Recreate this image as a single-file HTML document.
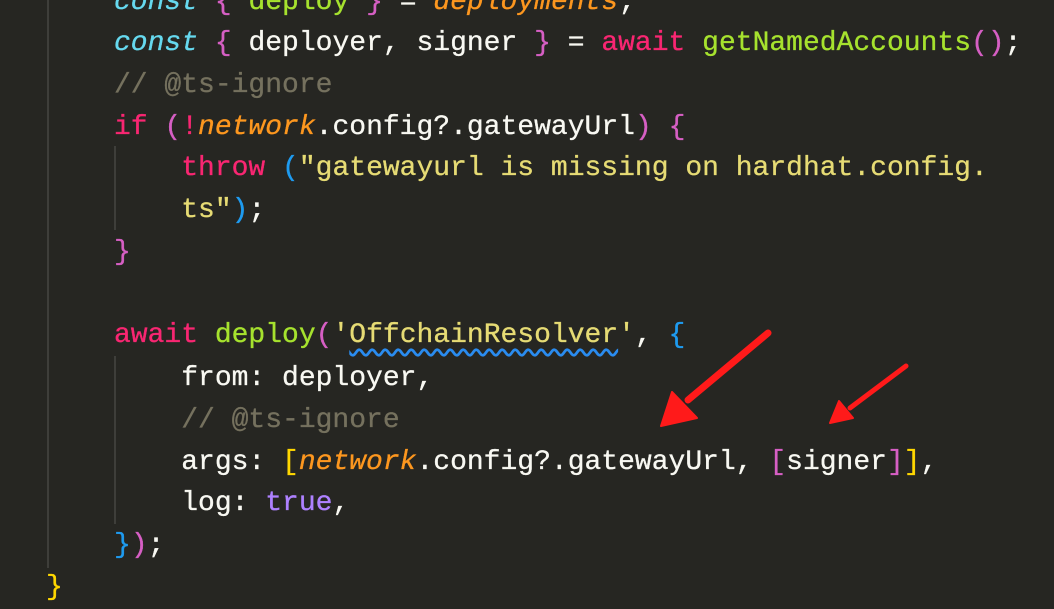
<!DOCTYPE html>
<html><head><style>
body{margin:0;width:1054px;height:576px;background:#262622;overflow:hidden;position:relative;font-family:"Liberation Mono",monospace;font-size:28px;}
.l{position:absolute;left:114px;white-space:pre;color:#f8f8f2;line-height:42px;height:42px;-webkit-text-stroke:0.3px currentColor}
.k{color:#f92672}.c{color:#66d9ef;font-style:italic}.s{color:#e6db74}.g{color:#a6e22e}.p{color:#d65fc4}.b{color:#1e9bf0}
.cm{color:#75715e}.n{color:#fd971f;font-style:italic}.t{color:#ae81ff}.y{color:#ffd700}
.guide{position:absolute;width:2px;background:#3e3e3a}
</style></head><body>
<div class="guide" style="left:47px;top:0;height:568px"></div>
<div class="guide" style="left:114px;top:146px;height:84px"></div>
<div class="guide" style="left:114px;top:356px;height:168px"></div>
<div class="l" style="top:-18px"><span class="c">const</span> <span class="p">{</span> <span class="g">deploy</span> <span class="p">}</span> = <span class="n">deployments</span>;</div>
<div class="l" style="top:23px"><span class="c">const</span> <span class="p">{</span> deployer, signer <span class="p">}</span> = <span class="k">await</span> <span class="g">getNamedAccounts</span><span class="p">(</span><span class="p">)</span>;</div>
<div class="l cm" style="top:65px">// @ts-ignore</div>
<div class="l" style="top:107px"><span class="k">if</span> <span class="p">(</span><span class="k">!</span><span class="n">network</span>.config?.gatewayUrl<span class="p">)</span> <span class="p">{</span></div>
<div class="l" style="top:148px">    <span class="k">throw</span> <span class="b">(</span><span class="s">"gatewayurl is missing on hardhat.config.</span></div>
<div class="l" style="top:190px">    <span class="s">ts"</span><span class="b">)</span>;</div>
<div class="l" style="top:232px"><span class="p">}</span></div>
<div class="l" style="top:315px"><span class="k">await</span> <span class="g">deploy</span><span class="p">(</span><span class="s">'<span style="text-decoration:underline wavy #2a8cf0;text-underline-offset:6px">OffchainResolver</span>'</span>, <span class="b">{</span></div>
<div class="l" style="top:358px">    from: deployer,</div>
<div class="l cm" style="top:400px">    // @ts-ignore</div>
<div class="l" style="top:442px">    args: <span class="y">[</span><span class="n">network</span>.config?.gatewayUrl, <span class="p">[</span>signer<span class="p">]</span><span class="y">]</span>,</div>
<div class="l" style="top:483px">    log: <span class="t">true</span>,</div>
<div class="l" style="top:525px"><span class="b">}</span><span class="p">)</span>;</div>
<div class="l" style="top:567px;left:46px"><span class="y">}</span></div>
<svg style="position:absolute;left:0;top:0" width="1054" height="576">
<g fill="#ff1a1a" stroke="#ff1a1a" stroke-linecap="round" stroke-linejoin="round">
<path d="M768,333 L688,400" stroke-width="7" fill="none"/>
<path d="M661,426 L672,392 L697,418 Z" stroke-width="2"/>
<path d="M906,366 L850,408" stroke-width="5" fill="none"/>
<path d="M830,423 L839,401 L853,418 Z" stroke-width="2"/>
</g></svg>
</body></html>
